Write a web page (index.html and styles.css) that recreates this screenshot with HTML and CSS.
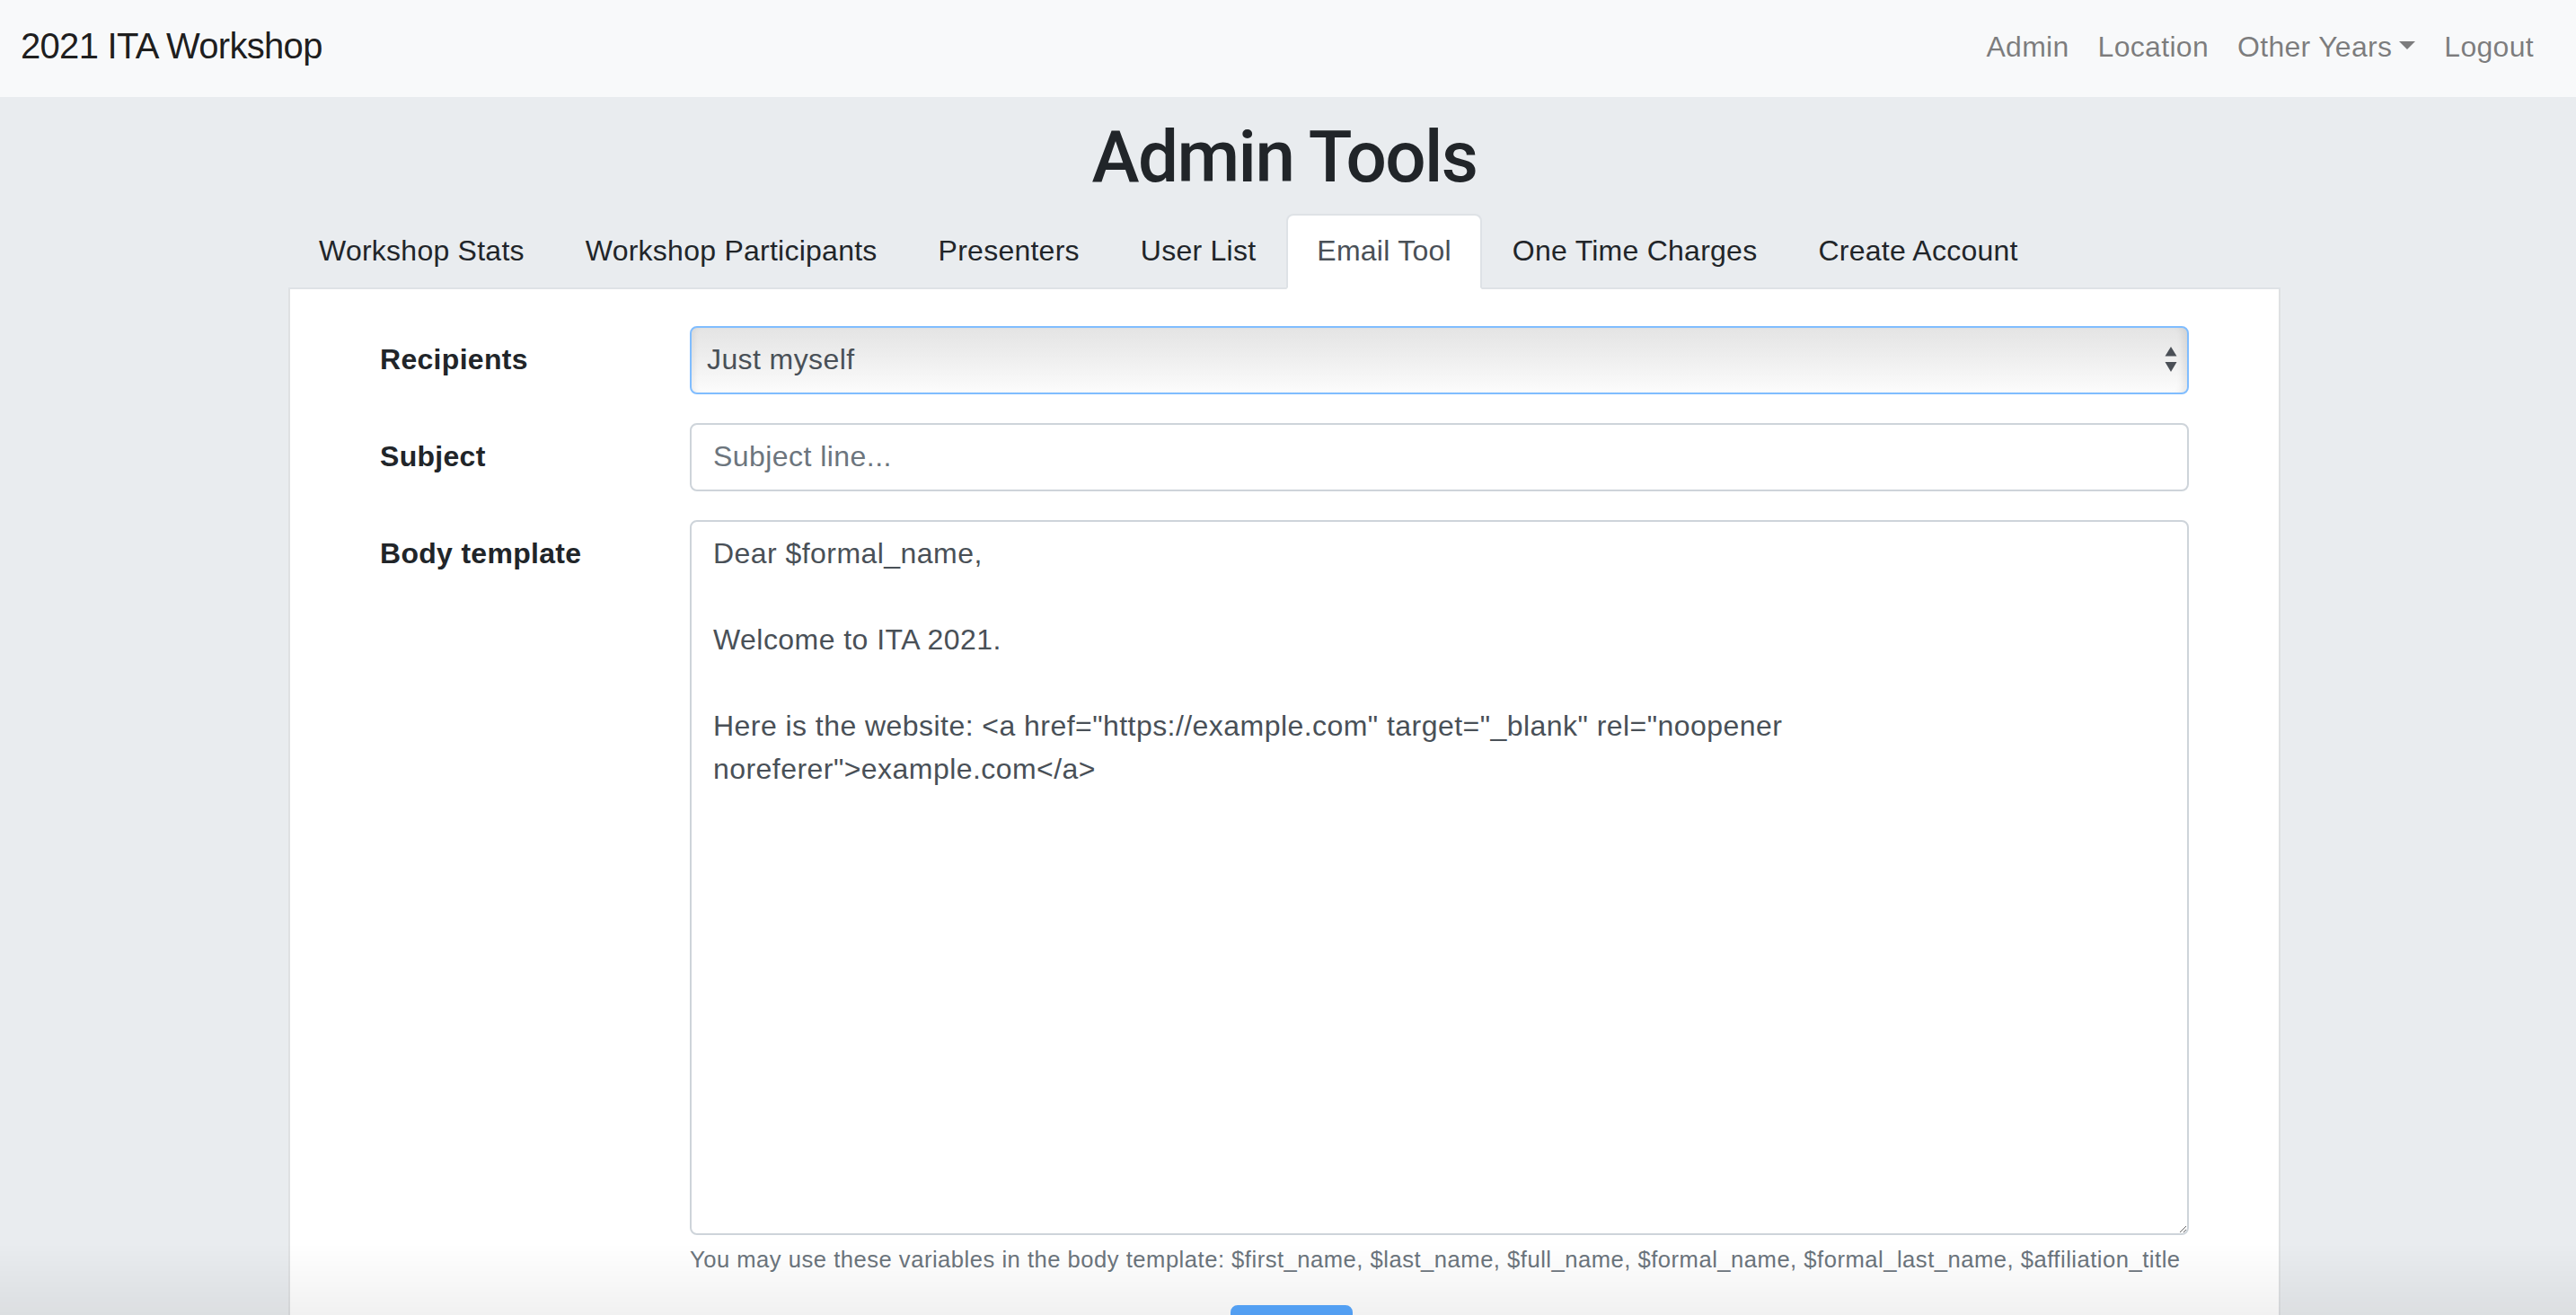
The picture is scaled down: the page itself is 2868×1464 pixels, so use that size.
FILE: index.html
```html
<!DOCTYPE html>
<html lang="en">
<head>
<meta charset="utf-8">
<title>Admin Tools - 2021 ITA Workshop</title>
<link rel="stylesheet" href="styles.css">
</head>
<body>
<nav class="navbar">
  <a class="brand" href="#">2021 ITA Workshop</a>
  <ul class="navlinks">
    <li><a href="#">Admin</a></li>
    <li><a href="#">Location</a></li>
    <li><a href="#">Other Years<span class="caret"></span></a></li>
    <li><a href="#">Logout</a></li>
  </ul>
</nav>
<div class="page">
  <main class="container">
    <h1 class="title">Admin Tools</h1>
    <ul class="tabs">
      <li><a class="tab" href="#">Workshop Stats</a></li>
      <li><a class="tab" href="#">Workshop Participants</a></li>
      <li><a class="tab" href="#">Presenters</a></li>
      <li><a class="tab" href="#">User List</a></li>
      <li><a class="tab active" href="#">Email Tool</a></li>
      <li><a class="tab" href="#">One Time Charges</a></li>
      <li><a class="tab" href="#">Create Account</a></li>
    </ul>
    <section class="card">
      <form class="email-form">
        <div class="form-row">
          <label class="label" for="recipients">Recipients</label>
          <div class="field select-wrap">
            <select id="recipients" class="select">
              <option>Just myself</option>
            </select>
            <svg class="select-arrows" width="14" height="30" viewBox="0 0 14 30" aria-hidden="true">
              <polygon points="7,0 13.5,10.5 0.5,10.5" fill="#4a4f56"/>
              <polygon points="0.5,17 13.5,17 7,28" fill="#4a4f56"/>
            </svg>
          </div>
        </div>
        <div class="form-row">
          <label class="label" for="subject">Subject</label>
          <div class="field">
            <input id="subject" class="input" type="text" placeholder="Subject line...">
          </div>
        </div>
        <div class="form-row">
          <label class="label" for="body">Body template</label>
          <div class="field">
            <textarea id="body" class="textarea" rows="16">Dear $formal_name,

Welcome to ITA 2021.

Here is the website: &lt;a href="https://example.com" target="_blank" rel="noopener
noreferer"&gt;example.com&lt;/a&gt;</textarea>
            <small class="help">You may use these variables in the body template: $first_name, $last_name, $full_name, $formal_name, $formal_last_name, $affiliation_title</small>
          </div>
        </div>
        <div class="actions">
          <button class="btn" type="button" aria-label="Send" disabled></button>
        </div>
      </form>
    </section>
  </main>
</div>
<div class="bottom-shade"></div>
</body>
</html>
```
FILE: styles.css
```css
html {
  overflow: hidden;
}
body {
  margin: 0;
  background: #e9ecef;
  font-family: "Liberation Sans", Arial, sans-serif;
  font-size: 32px;
  line-height: 1.5;
  letter-spacing: 0.3px;
  color: #212529;
}
a {
  text-decoration: none;
}
ul {
  list-style: none;
  margin: 0;
  padding: 0;
}

/* Navbar */
.navbar {
  box-sizing: border-box;
  height: 108px;
  background: #f8f9fa;
  display: flex;
  justify-content: space-between;
  align-items: flex-start;
  padding: 21px 31px 0 23px;
}
.brand {
  font-size: 40px;
  line-height: 60px;
  letter-spacing: -0.7px;
  color: rgba(0, 0, 0, 0.9);
}
.navlinks {
  display: flex;
  margin-top: 7px;
}
.navlinks a {
  display: block;
  padding: 0 16px;
  line-height: 48px;
  color: rgba(0, 0, 0, 0.5);
}
.caret {
  display: inline-block;
  width: 0;
  height: 0;
  margin-left: 8px;
  vertical-align: 8px;
  border-top: 9.6px solid;
  border-left: 9.6px solid transparent;
  border-right: 9.6px solid transparent;
}

/* Page */
.page {
  padding-right: 8px;
}
.container {
  width: 2218px;
  margin: 0 auto;
}
.title {
  margin: 19px 0 15px;
  text-align: center;
  font-family: Roboto, "Liberation Sans", Arial, sans-serif;
  font-size: 80px;
  font-weight: 500;
  line-height: 96px;
  letter-spacing: -1.6px;
  color: #212529;
}

/* Tabs */
.tabs {
  display: flex;
  border-bottom: 2px solid #dee2e6;
}
.tab {
  display: block;
  margin-bottom: -2px;
  padding: 15px 32px 17px;
  line-height: 48px;
  letter-spacing: 0.25px;
  border: 2px solid transparent;
  border-radius: 8px 8px 0 0;
  color: #212529;
}
.tab.active {
  background: #fff;
  color: #495057;
  border-color: #dee2e6 #dee2e6 #fff;
}

/* Card */
.card {
  background: #fff;
  border: 2px solid #dfe1e3;
  border-top: 0;
  border-radius: 0 0 8px 8px;
  padding: 41px 100px 60px;
}
.form-row {
  display: grid;
  grid-template-columns: 345px 1fr;
  margin-bottom: 32px;
}
.label {
  padding-top: 13px;
  font-weight: 700;
  line-height: 48px;
  color: #212529;
}
.field {
  display: flex;
  flex-direction: column;
}
.select-wrap {
  position: relative;
}
.select {
  -webkit-appearance: none;
  appearance: none;
  box-sizing: border-box;
  width: 100%;
  height: 76px;
  margin: 0;
  padding: 0 60px 2px 17px;
  font: inherit;
  letter-spacing: 0.4px;
  color: #495057;
  border: 2px solid #80bdff;
  border-radius: 8px;
  background: linear-gradient(#e4e4e4, #eeeeee 45%, #fcfcfc);
  box-shadow: inset 7px 0 7px -5px rgba(0, 0, 0, 0.07), inset -9px 0 8px -5px rgba(0, 0, 0, 0.09);
  outline: none;
}
.select-arrows {
  position: absolute;
  right: 13px;
  top: 23px;
  pointer-events: none;
}
.input,
.textarea {
  box-sizing: border-box;
  width: 100%;
  margin: 0;
  padding: 11px 24px 13px;
  font: inherit;
  line-height: 48px;
  letter-spacing: 0.45px;
  color: #495057;
  background: #fff;
  border: 2px solid #ced4da;
  border-radius: 8px;
  outline: none;
}
.input {
  height: 76px;
}
.input::placeholder {
  color: #6c757d;
  opacity: 1;
}
.textarea {
  height: 796px;
  resize: vertical;
  display: block;
}
.help {
  margin-top: 8px;
  font-size: 25.6px;
  line-height: 38.4px;
  letter-spacing: 0.5px;
  color: #6c757d;
}
.actions {
  padding-left: 947px;
}
.btn {
  display: block;
  width: 136px;
  height: 76px;
  padding: 12px 24px;
  font: inherit;
  color: #fff;
  background: #007bff;
  border: 2px solid #007bff;
  border-radius: 8px;
  opacity: 0.65;
}

/* Bottom window shade */
.bottom-shade {
  position: fixed;
  left: 0;
  right: 0;
  bottom: 0;
  height: 80px;
  background: linear-gradient(rgba(0, 0, 0, 0), rgba(0, 0, 0, 0.055));
  pointer-events: none;
}
```
